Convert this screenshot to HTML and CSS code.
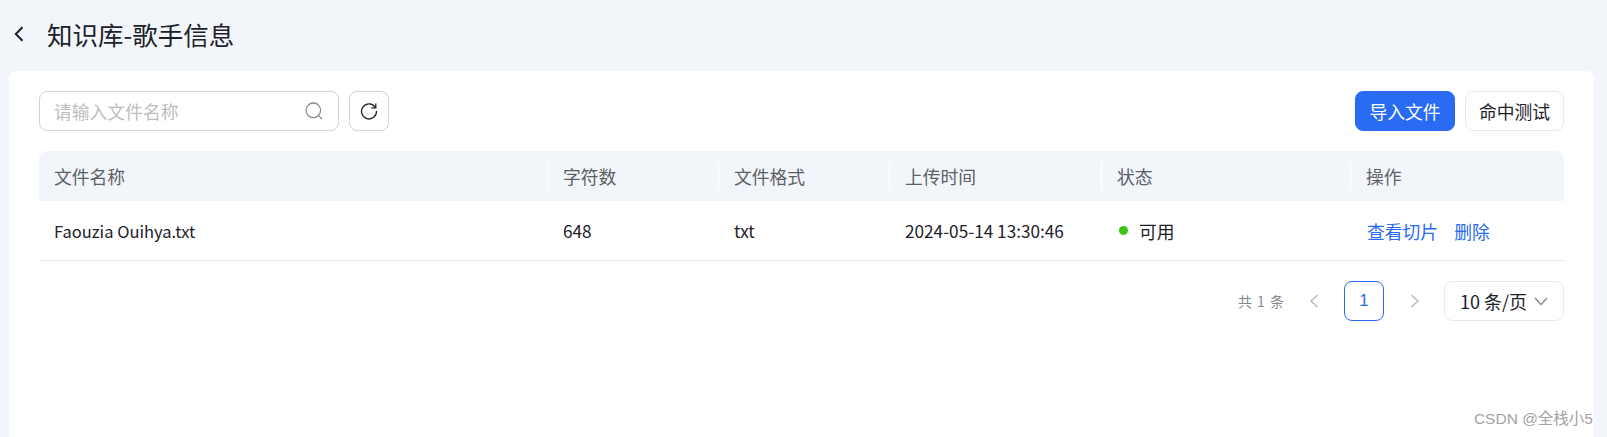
FILE: index.html
```html
<!DOCTYPE html>
<html lang="zh-CN">
<head>
<meta charset="utf-8">
<title>知识库-歌手信息</title>
<link rel="stylesheet" href="styles.css">
</head>
<body>
<div class="page">
  <header class="title-bar">
    <svg class="back" width="12" height="16" viewBox="0 0 12 16"><path d="M9.5 1.2 L2.8 8 L9.5 14.8" fill="none" stroke="#1d2129" stroke-width="2"/></svg>
    <h1 class="title">知识库-歌手信息</h1>
  </header>
  <main class="card">
    <div class="toolbar">
      <div class="search">
        <span class="placeholder">请输入文件名称</span>
        <svg width="20" height="20" viewBox="0 0 20 20"><circle cx="9.3" cy="9.3" r="7.3" fill="none" stroke="#8a8a8a" stroke-width="1.3"/><path d="M14.6 14.6 L18 18" stroke="#8a8a8a" stroke-width="1.3" fill="none"/></svg>
      </div>
      <button class="icon-btn">
        <svg width="18" height="18" viewBox="0 0 18 18"><path d="M15.4 5.5 A7.5 7.5 0 1 0 16.5 9" fill="none" stroke="#1d2129" stroke-width="1.3"/><path d="M15.8 1.5 V5.9 H11.4" fill="none" stroke="#1d2129" stroke-width="1.3"/></svg>
      </button>
      <div class="spacer"></div>
      <button class="btn primary">导入文件</button>
      <button class="btn">命中测试</button>
    </div>
    <div class="table">
      <div class="row head">
        <div class="cell">文件名称</div>
        <div class="cell">字符数</div>
        <div class="cell">文件格式</div>
        <div class="cell">上传时间</div>
        <div class="cell">状态</div>
        <div class="cell">操作</div>
      </div>
      <div class="row body">
        <div class="cell name">Faouzia Ouihya.txt</div>
        <div class="cell latin">648</div>
        <div class="cell latin">txt</div>
        <div class="cell latin">2024-05-14 13:30:46</div>
        <div class="cell"><span class="dot"></span>可用</div>
        <div class="cell actions"><a class="link">查看切片</a><a class="link">删除</a></div>
      </div>
    </div>
    <div class="pager">
      <span class="total">共 1 条</span>
      <svg class="arrow" width="12" height="14" viewBox="0 0 12 14"><path d="M9.5 1 L3 7 L9.5 13" fill="none" stroke="#b5b5b5" stroke-width="1.3"/></svg>
      <span class="page-num">1</span>
      <svg class="arrow" width="12" height="14" viewBox="0 0 12 14"><path d="M2.5 1 L9 7 L2.5 13" fill="none" stroke="#b5b5b5" stroke-width="1.3"/></svg>
      <div class="size">10 条/页
        <svg width="14" height="9" viewBox="0 0 14 9"><path d="M1 1 L7 7.5 L13 1" fill="none" stroke="#888" stroke-width="1.3"/></svg>
      </div>
    </div>
    <div class="watermark">CSDN @全栈小5</div>
  </main>
</div>
</body>
</html>
```
FILE: styles.css
```css
* { box-sizing: border-box; }
html, body { margin: 0; height: 100%; overflow: hidden; }
body {
  background: #f2f5fa;
  font-family: "Noto Sans CJK SC", sans-serif;
  font-size: 17.8px;
  color: #1d2129;
}
.page { height: 437px; padding: 0 13px 0 9px; display: flex; flex-direction: column; }
.title-bar { height: 71px; display: flex; align-items: center; padding-left: 4px; padding-bottom: 3px; }
.back { flex: none; }
.title { margin: 0 0 0 22px; font-size: 25.5px; font-weight: 400; line-height: 32px; color: #1d2129; }
.card { position: relative; flex: 1; background: #fff; border-radius: 8px 8px 0 0; padding: 20px 30px 0; }
.toolbar { display: flex; height: 40px; align-items: stretch; }
.search {
  width: 300px; border: 1px solid #d3d3d6; border-radius: 8px;
  display: flex; align-items: center; justify-content: space-between; padding: 0 14px;
}
.placeholder { color: #bdbdbd; }
.icon-btn {
  width: 40px; margin-left: 10px; padding: 0; background: #fff; border: 1px solid #d3d3d6; border-radius: 8px;
  display: flex; align-items: center; justify-content: center;
}
.spacer { flex: 1; }
.btn {
  width: 99px; margin-left: 10px; padding: 0; background: #fff; border: 1px solid #e8e9ed; border-radius: 8px;
  font: inherit; color: #1d2129;
}
.btn.primary { width: 100px; background: #296bf2; border-color: #296bf2; color: #fff; }
.table { margin-top: 20px; }
.row { display: grid; grid-template-columns: 509px 171px 171px 212px 249px 213px; }
.cell { display: flex; align-items: center; padding-left: 15px; }
.latin { font-size: 17.2px; }
.name { font-size: 16.5px; }
.head { height: 50px; background: #f2f5fa; border-radius: 8px 8px 0 0; color: #5c5f66; }
.head .cell { position: relative; }
.head .cell + .cell::before {
  content: ""; position: absolute; left: -1px; top: 11px; width: 1px; height: 28px; background: #fff;
}
.body { height: 60px; border-bottom: 1px solid #e8e9ed; }
.dot { width: 9px; height: 9px; border-radius: 50%; background: #3cc516; margin: 0 11px 0 2px; }
.actions { gap: 16px; padding-left: 16px; }
.link { color: #296bf2; }
.pager { margin-top: 20px; height: 40px; display: flex; align-items: center; justify-content: flex-end; }
.total { font-size: 14px; color: #85878c; letter-spacing: 1px; margin-right: 23px; }
.page-num {
  width: 40px; height: 40px; margin: 0 25px 0 24px; border: 1px solid #296bf2; border-radius: 8px;
  display: flex; align-items: center; justify-content: center; color: #296bf2;
  font-family: "Liberation Sans", sans-serif; font-size: 17px;
}
.size {
  width: 120px; height: 40px; margin-left: 23px; border: 1px solid #e8e9ed; border-radius: 8px;
  display: flex; align-items: center; justify-content: space-between; padding: 0 15px; font-size: 18px;
}
.watermark { position: absolute; right: 1px; bottom: 9px; font-family: "Liberation Sans", "Noto Sans CJK SC", sans-serif; font-size: 15.5px; color: #a3a3a3; }
```
